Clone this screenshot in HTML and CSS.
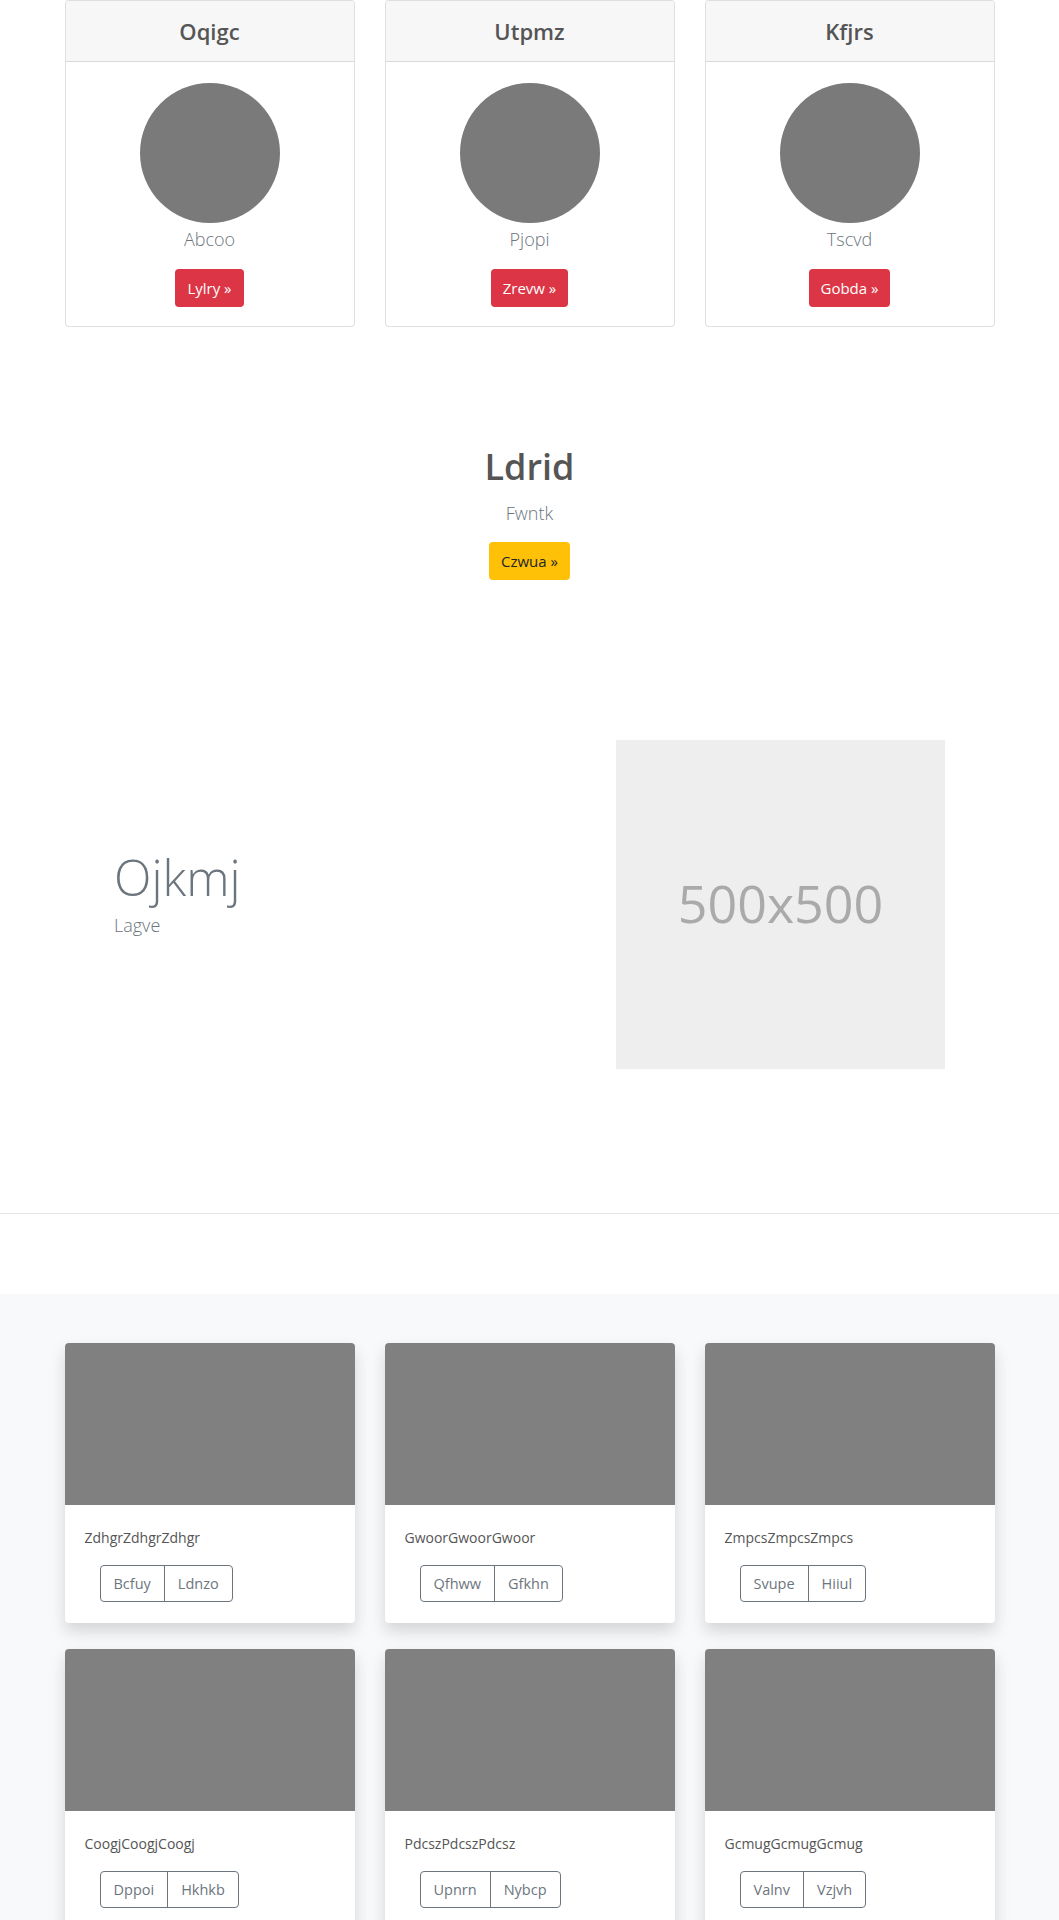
FILE: index.html
```html
<!DOCTYPE html>
<html lang="en">
<head>
<meta charset="utf-8">
<title>Page</title>
<link rel="stylesheet" href="styles.css">
</head>
<body>
<section class="team">
  <div class="container grid3">
    <div class="card">
      <div class="card-header"><h3 class="card-title">Oqigc</h3></div>
      <div class="card-body center">
        <div class="avatar"></div>
        <p class="name">Abcoo</p>
        <a class="btn btn-danger" href="#">Lylry »</a>
      </div>
    </div>
    <div class="card">
      <div class="card-header"><h3 class="card-title">Utpmz</h3></div>
      <div class="card-body center">
        <div class="avatar"></div>
        <p class="name">Pjopi</p>
        <a class="btn btn-danger" href="#">Zrevw »</a>
      </div>
    </div>
    <div class="card">
      <div class="card-header"><h3 class="card-title">Kfjrs</h3></div>
      <div class="card-body center">
        <div class="avatar"></div>
        <p class="name">Tscvd</p>
        <a class="btn btn-danger" href="#">Gobda »</a>
      </div>
    </div>
  </div>
</section>

<section class="cta center">
  <h2 class="cta-title">Ldrid</h2>
  <p class="cta-sub">Fwntk</p>
  <a class="btn btn-warning" href="#">Czwua »</a>
</section>

<section class="feature">
  <div class="feature-text">
    <h1 class="display">Ojkmj</h1>
    <p class="lead">Lagve</p>
  </div>
  <div class="placeholder">500x500</div>
</section>

<hr class="divider">

<section class="gallery">
  <div class="container grid3 gallery-grid">
    <div class="shot">
      <div class="shot-img"></div>
      <div class="shot-body">
        <p class="shot-text">ZdhgrZdhgrZdhgr</p>
        <div class="btn-group"><a class="gbtn" href="#">Bcfuy</a><a class="gbtn" href="#">Ldnzo</a></div>
      </div>
    </div>
    <div class="shot">
      <div class="shot-img"></div>
      <div class="shot-body">
        <p class="shot-text">GwoorGwoorGwoor</p>
        <div class="btn-group"><a class="gbtn" href="#">Qfhww</a><a class="gbtn" href="#">Gfkhn</a></div>
      </div>
    </div>
    <div class="shot">
      <div class="shot-img"></div>
      <div class="shot-body">
        <p class="shot-text">ZmpcsZmpcsZmpcs</p>
        <div class="btn-group"><a class="gbtn" href="#">Svupe</a><a class="gbtn" href="#">Hiiul</a></div>
      </div>
    </div>
    <div class="shot">
      <div class="shot-img"></div>
      <div class="shot-body">
        <p class="shot-text">CoogjCoogjCoogj</p>
        <div class="btn-group"><a class="gbtn" href="#">Dppoi</a><a class="gbtn" href="#">Hkhkb</a></div>
      </div>
    </div>
    <div class="shot">
      <div class="shot-img"></div>
      <div class="shot-body">
        <p class="shot-text">PdcszPdcszPdcsz</p>
        <div class="btn-group"><a class="gbtn" href="#">Upnrn</a><a class="gbtn" href="#">Nybcp</a></div>
      </div>
    </div>
    <div class="shot">
      <div class="shot-img"></div>
      <div class="shot-body">
        <p class="shot-text">GcmugGcmugGcmug</p>
        <div class="btn-group"><a class="gbtn" href="#">Valnv</a><a class="gbtn" href="#">Vzjvh</a></div>
      </div>
    </div>
  </div>
</section>
</body>
</html>
```

FILE: styles.css
```css
* { box-sizing: border-box; }
body {
  margin: 0;
  font-family: "Open Sans", "Noto Sans", "Liberation Sans", sans-serif;
  color: #212529;
  background: #fff;
}
.center { text-align: center; }
.container {
  width: 960px;
  margin: 0 auto;
  padding: 0 15px;
}
.grid3 {
  display: grid;
  grid-template-columns: repeat(3, 290px);
  column-gap: 30px;
}

/* team cards */
.card {
  border: 1px solid rgba(0,0,0,.125);
  border-radius: 4px;
  background: #fff;
  overflow: hidden;
}
.card-header {
  background: #f7f7f7;
  border-bottom: 1px solid rgba(0,0,0,.125);
  height: 61px;
  display: flex;
  align-items: center;
  justify-content: center;
}
.card-title {
  margin: 0;
  font-size: 22px;
  font-weight: 600;
  color: #555;
  line-height: 1.2;
}
.card-body {
  padding: 21px 20px 19px;
}
.avatar {
  width: 140px;
  height: 140px;
  border-radius: 50%;
  background: #7a7a7a;
  margin: 0 auto;
}
.name {
  margin: 4px 0 0;
  font-size: 18px;
  font-weight: 300;
  line-height: 24px;
  color: #6c757d;
}
.btn {
  display: inline-block;
  font-size: 15px;
  line-height: 24px;
  padding: 7px 12px;
  border-radius: 4px;
  text-decoration: none;
  margin-top: 18px;
}
.btn-danger { background: #dc3545; color: #fff; }
.btn-warning { background: #ffc107; color: #212529; }

/* cta */
.cta { padding-top: 116px; }
.cta-title {
  margin: 0;
  font-size: 36px;
  font-weight: 600;
  line-height: 48px;
  color: #555;
}
.cta-sub {
  margin: 10px 0 0;
  font-size: 18px;
  font-weight: 300;
  line-height: 24px;
  color: #6c757d;
}
.cta .btn { margin-top: 17px; }

/* feature */
.feature {
  display: flex;
  align-items: flex-start;
  margin-top: 160px;
  padding-left: 114px;
}
.feature-text {
  width: 502px;
  padding-top: 103px;
}
.display {
  margin: 0;
  font-size: 49px;
  font-weight: 300;
  line-height: 68px;
  color: #6c757d;
}
.lead {
  margin: 2px 0 0;
  font-size: 18px;
  font-weight: 300;
  line-height: 24px;
  color: #6c757d;
}
.placeholder {
  width: 329px;
  height: 329px;
  background: #eee;
  color: #aaa;
  font-size: 52px;
  padding-bottom: 4px;
  display: flex;
  align-items: center;
  justify-content: center;
}

.divider {
  margin: 144px 0 0;
  border: 0;
  border-top: 1px solid #e5e5e5;
}

/* gallery */
.gallery {
  margin-top: 80px;
  background: #f8f9fa;
  padding-top: 49px;
  padding-bottom: 48px;
}
.gallery-grid { row-gap: 26px; }
.shot {
  background: #fff;
  border-radius: 4px;
  overflow: hidden;
  box-shadow: 0 8px 16px rgba(0,0,0,.15);
}
.shot-img {
  height: 162px;
  background: #808080;
}
.shot-body { padding: 22px 20px 21px; }
.shot-text {
  margin: 0;
  font-size: 14px;
  line-height: 22px;
  color: #555;
}
.btn-group {
  display: inline-flex;
  margin: 16px 0 0 15px;
  border: 1px solid #6c757d;
  border-radius: 4px;
}
.gbtn {
  display: block;
  font-size: 14.5px;
  line-height: 21px;
  padding: 7px 13px;
  color: #6c757d;
  text-decoration: none;
}
.gbtn + .gbtn { border-left: 1px solid #6c757d; }
```
